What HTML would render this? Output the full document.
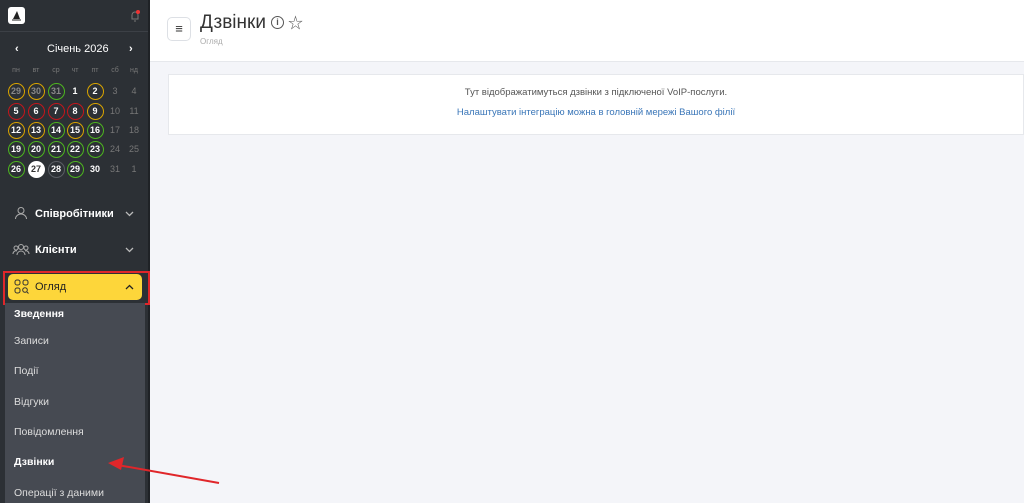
<!DOCTYPE html>
<html><head><meta charset="utf-8"><style>
*{box-sizing:border-box;margin:0;padding:0}
body{width:1024px;height:503px;overflow:hidden;background:#f4f5f9;font-family:"Liberation Sans","Noto Sans CJK SC",sans-serif;position:relative}
.sb{position:absolute;left:0;top:0;width:150px;height:503px;background:#2c3035;border-right:2px solid #1f2226}
.logo{position:absolute;left:8px;top:7px;width:17px;height:17px;background:#fff;border-radius:3px}
.topline{position:absolute;left:0;top:31px;width:148px;height:1px;background:#3c4046}
.cal{position:absolute;color:#fff;font-size:11px}
.d{position:absolute;width:17px;height:17px;margin-left:-8.5px;margin-top:-8.5px;border-radius:50%;border:1.5px solid #5a5e64;color:#fff;font-size:9px;font-weight:bold;text-align:center;line-height:14px}
.y{border-color:#d9a400}.r{border-color:#c4161c}.g{border-color:#4db51f}
.n{border:none;line-height:17px}
.m{color:#888}.f{color:#777;font-weight:normal}
.w{background:#fff;color:#333;border-color:#fff}
.h{position:absolute;font-size:7px;color:#777;transform:translateX(-50%)}
.menu{position:absolute;left:35px;color:#fff;font-size:11px;font-weight:bold}
.chev{position:absolute;left:125px}
.sub{position:absolute;left:5px;top:303px;width:140px;height:200px;background:#464a52}
.si{position:absolute;left:14px;color:#ddd;font-size:10.5px}
.hdr{position:absolute;left:150px;top:0;right:0;height:62px;background:#fff;border-bottom:1px solid #e6e8ec}
.card{position:absolute;left:168px;top:74px;right:0;height:61px;background:#fff;border:1px solid #e6e8ec;text-align:center;font-size:9.5px}
</style></head><body>
<div class="sb">
<div class="logo"><svg width="17" height="17"><path d="M5 12 L9 4 L12 12 Z" fill="#222"/><path d="M4 13h9" stroke="#222"/></svg></div>
<svg style="position:absolute;left:129px;top:9px" width="12" height="14"><path d="M3 10 V6 a3 3 0 0 1 6 0 V10 Z M5 12 h2" stroke="#777" fill="none"/><circle cx="9" cy="3" r="2" fill="#e33"/></svg>
<div class="topline"></div>
<div class="cal" style="left:15px;top:43px;font-weight:bold">‹</div>
<div class="cal" style="left:47px;top:43px">Січень 2026</div>
<div class="cal" style="left:129px;top:43px;font-weight:bold">›</div>
<div class="h" style="left:16px;top:67px">пн</div><div class="h" style="left:36px;top:67px">вт</div><div class="h" style="left:56px;top:67px">ср</div><div class="h" style="left:75px;top:67px">чт</div><div class="h" style="left:95px;top:67px">пт</div><div class="h" style="left:115px;top:67px">сб</div><div class="h" style="left:134px;top:67px">нд</div>
<div class="d y m" style="left:16px;top:91px">29</div><div class="d y m" style="left:36px;top:91px">30</div><div class="d g m" style="left:56px;top:91px">31</div><div class="d n" style="left:75px;top:91px">1</div><div class="d y" style="left:95px;top:91px">2</div><div class="d n f" style="left:115px;top:91px">3</div><div class="d n f" style="left:134px;top:91px">4</div>
<div class="d r" style="left:16px;top:111px">5</div><div class="d r" style="left:36px;top:111px">6</div><div class="d r" style="left:56px;top:111px">7</div><div class="d r" style="left:75px;top:111px">8</div><div class="d y" style="left:95px;top:111px">9</div><div class="d n f" style="left:115px;top:111px">10</div><div class="d n f" style="left:134px;top:111px">11</div>
<div class="d y" style="left:16px;top:130px">12</div><div class="d y" style="left:36px;top:130px">13</div><div class="d g" style="left:56px;top:130px">14</div><div class="d y" style="left:75px;top:130px">15</div><div class="d g" style="left:95px;top:130px">16</div><div class="d n f" style="left:115px;top:130px">17</div><div class="d n f" style="left:134px;top:130px">18</div>
<div class="d g" style="left:16px;top:149px">19</div><div class="d g" style="left:36px;top:149px">20</div><div class="d g" style="left:56px;top:149px">21</div><div class="d g" style="left:75px;top:149px">22</div><div class="d g" style="left:95px;top:149px">23</div><div class="d n f" style="left:115px;top:149px">24</div><div class="d n f" style="left:134px;top:149px">25</div>
<div class="d g" style="left:16px;top:169px">26</div><div class="d w" style="left:36px;top:169px">27</div><div class="d" style="left:56px;top:169px">28</div><div class="d g" style="left:75px;top:169px">29</div><div class="d n" style="left:95px;top:169px">30</div><div class="d n f" style="left:115px;top:169px">31</div><div class="d n f" style="left:134px;top:169px">1</div>
<svg style="position:absolute;left:14px;top:206px" width="14" height="14"><circle cx="7" cy="4.5" r="3" stroke="#aaa" fill="none"/><path d="M1.5 13 a5.5 5 0 0 1 11 0" stroke="#aaa" fill="none"/></svg>
<div class="menu" style="top:208px">Співробітники</div>
<svg class="chev" style="top:211px" width="9" height="6"><path d="M1 1l3.5 3.5L8 1" stroke="#bbb" fill="none" stroke-width="1.3"/></svg>
<svg style="position:absolute;left:12px;top:243px" width="18" height="13"><circle cx="9" cy="4" r="2.5" stroke="#aaa" fill="none"/><circle cx="4" cy="5" r="2" stroke="#aaa" fill="none"/><circle cx="14" cy="5" r="2" stroke="#aaa" fill="none"/><path d="M5 12 a4 4 0 0 1 8 0 M1 11 a3 3 0 0 1 4-3 M17 11 a3 3 0 0 0 -4-3" stroke="#aaa" fill="none"/></svg>
<div class="menu" style="top:244px">Клієнти</div>
<svg class="chev" style="top:247px" width="9" height="6"><path d="M1 1l3.5 3.5L8 1" stroke="#bbb" fill="none" stroke-width="1.3"/></svg>
<div style="position:absolute;left:3px;top:271px;width:147px;height:34px;border:2px solid #e0262a"></div>
<div style="position:absolute;left:8px;top:274px;width:134px;height:26px;background:#fdd63a;border-radius:5px"></div>
<svg style="position:absolute;left:14px;top:279px" width="15" height="15" fill="none" stroke="#333"><rect x="1" y="1" width="5" height="5" rx="2"/><rect x="9" y="1" width="5" height="5" rx="2"/><rect x="1" y="9" width="5" height="5" rx="2"/><circle cx="11" cy="11" r="2.3"/><path d="M13 13l1.5 1.5"/></svg>
<div class="menu" style="top:281px;color:#222;font-weight:normal">Огляд</div>
<svg class="chev" style="top:284px" width="9" height="6"><path d="M1 5l3.5-3.5L8 5" stroke="#222" fill="none" stroke-width="1.3"/></svg>
<div class="sub"></div>
<div class="si" style="top:308px;color:#fff;font-weight:bold">Зведення</div>
<div class="si" style="top:335px">Записи</div>
<div class="si" style="top:365px">Події</div>
<div class="si" style="top:396px">Відгуки</div>
<div class="si" style="top:426px">Повідомлення</div>
<div class="si" style="top:456px;color:#fff;font-weight:bold">Дзвінки</div>
<div class="si" style="top:487px">Операції з даними</div>
</div>
<div class="hdr">
<div style="position:absolute;left:17px;top:17px;width:24px;height:24px;border:1px solid #dde0e5;border-radius:5px;text-align:center;line-height:22px;font-size:13px;color:#333">≡</div>
<div style="position:absolute;left:50px;top:12px;font-size:19px;color:#333">Дзвінки</div>
<div style="position:absolute;left:50px;top:37px;font-size:8px;color:#aaa">Огляд</div>
<div style="position:absolute;left:121px;top:16px;width:13px;height:13px;border:1.3px solid #555;border-radius:50%;font-size:9px;font-weight:bold;color:#555;text-align:center;line-height:11px">i</div>
<div style="position:absolute;left:138px;top:12px;font-size:15px;color:#555">☆</div>
</div>
<div class="card">
<div style="margin-top:12px;color:#555">Тут відображатимуться дзвінки з підключеної VoIP-послуги.</div>
<div style="margin-top:9px;color:#3a76b8">Налаштувати інтеграцію можна в головній мережі Вашого філії</div>
</div>
<svg style="position:absolute;left:0;top:0" width="1024" height="503"><path d="M219 483 L112 464" stroke="#e0262a" stroke-width="2"/><path d="M108 463 L124 457 L121 470 Z" fill="#e0262a"/></svg>
</body></html>
